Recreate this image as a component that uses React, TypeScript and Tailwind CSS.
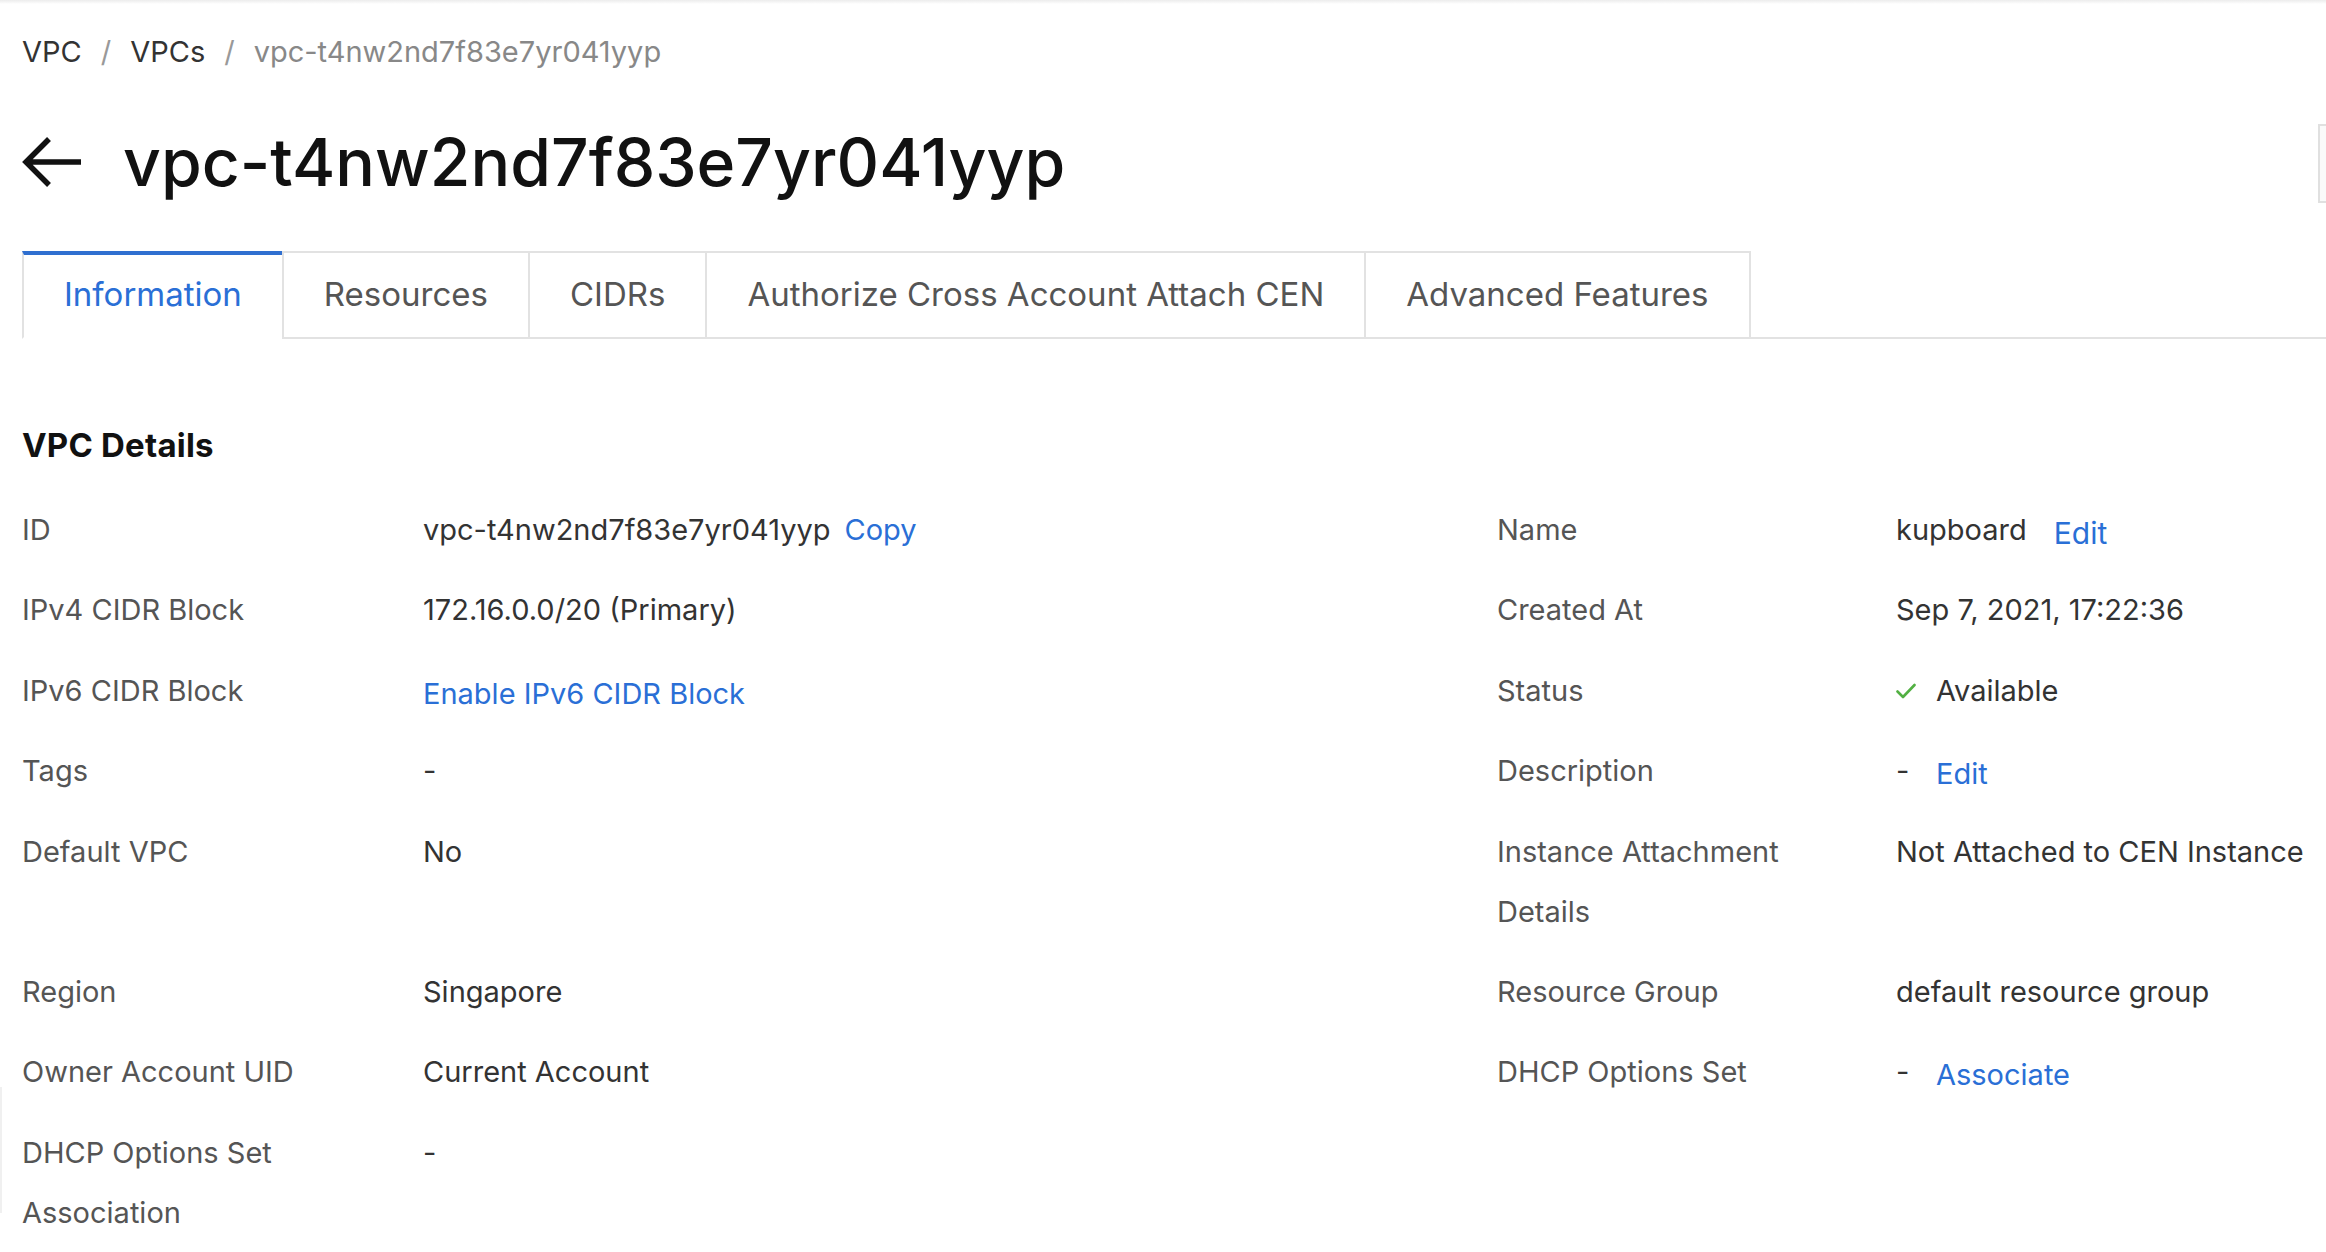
import React from "react";

const font = { fontFamily: "Inter, 'Noto Sans', sans-serif" };

function Check() {
  return (
    <svg width="20" height="16" viewBox="0 0 20 16" className="mr-[20px] shrink-0">
      <path d="M1.5 8.5 L7 14 L18.5 2" fill="none" stroke="#52b043" strokeWidth="2.6" strokeLinecap="round" strokeLinejoin="round" />
    </svg>
  );
}

function Link({ children, className = "" }: { children: React.ReactNode; className?: string }) {
  return <span className={`text-[#2a6fd6] ${className}`}>{children}</span>;
}

type Cell = { label: string; value: React.ReactNode };

const rows: [Cell, Cell | null][] = [
  [
    {
      label: "ID",
      value: (
        <span className="flex items-center">
          vpc-t4nw2nd7f83e7yr041yyp
          <Link className="ml-[14px]">Copy</Link>
        </span>
      ),
    },
    {
      label: "Name",
      value: (
        <span className="flex items-center">
          kupboard
          <Link className="ml-[27px] text-[30px] translate-y-[3px]">Edit</Link>
        </span>
      ),
    },
  ],
  [
    { label: "IPv4 CIDR Block", value: "172.16.0.0/20 (Primary)" },
    { label: "Created At", value: "Sep 7, 2021, 17:22:36" },
  ],
  [
    { label: "IPv6 CIDR Block", value: <Link className="inline-block translate-y-[3px]">Enable IPv6 CIDR Block</Link> },
    {
      label: "Status",
      value: (
        <span className="flex items-center">
          <Check />
          Available
        </span>
      ),
    },
  ],
  [
    { label: "Tags", value: "-" },
    {
      label: "Description",
      value: (
        <span className="flex items-center">
          <span className="w-[40px]">-</span>
          <Link className="translate-y-[3px]">Edit</Link>
        </span>
      ),
    },
  ],
  [
    { label: "Default VPC", value: "No" },
    { label: "Instance Attachment Details", value: "Not Attached to CEN Instance" },
  ],
  [
    { label: "Region", value: "Singapore" },
    { label: "Resource Group", value: "default resource group" },
  ],
  [
    { label: "Owner Account UID", value: "Current Account" },
    {
      label: "DHCP Options Set",
      value: (
        <span className="flex items-center">
          <span className="w-[40px]">-</span>
          <Link className="translate-y-[3px]">Associate</Link>
        </span>
      ),
    },
  ],
  [{ label: "DHCP Options Set Association", value: "-" }, null],
];

const tabs = ["Information", "Resources", "CIDRs", "Authorize Cross Account Attach CEN", "Advanced Features"];

export default function App() {
  return (
    <div className="relative w-full min-h-[1252px] overflow-hidden bg-white" style={font}>
      <div className="h-[4px] bg-gradient-to-b from-[#ececec] to-white" />
      <div className="absolute left-0 top-[1087px] h-[126px] w-[2px] bg-[#f0f0f0]" />
      <div className="absolute left-[2318px] top-[124px] h-[79px] w-[120px] border-2 border-[#e0e0e0] bg-[#fafafa]" />

      <div className="pl-[22px]">
        {/* breadcrumb */}
        <div className="mt-[28px] flex h-[40px] items-center text-[29px] leading-[40px]">
          <span className="text-[#333]">VPC</span>
          <span className="mx-[19px] text-[#999]">/</span>
          <span className="text-[#333]">VPCs</span>
          <span className="mx-[19px] text-[#999]">/</span>
          <span className="text-[#888]">vpc-t4nw2nd7f83e7yr041yyp</span>
        </div>

        {/* title */}
        <div className="mt-[50px] flex h-[80px] items-center">
          <svg width="62" height="50" viewBox="0 0 62 50" className="shrink-0">
            <path d="M4 25 H59 M27 2 L4 25 L27 48" fill="none" stroke="#111" strokeWidth="5.5" strokeLinecap="butt" strokeLinejoin="miter" />
          </svg>
          <h1 className="ml-[39px] text-[66px] font-medium leading-[80px] text-[#111]">
            vpc-t4nw2nd7f83e7yr041yyp
          </h1>
        </div>

        {/* tabs */}
        <div className="mt-[49px] flex border-b-2 border-[#e2e2e2]">
          {tabs.map((t, i) => (
            <div
              key={t}
              className={
                i === 0
                  ? "-mb-[2px] flex h-[88px] items-center border-x-2 border-b-2 border-t-[4px] border-x-[#e2e2e2] border-b-white border-t-[#2f6fd0] px-[40px] pb-[2px] text-[33px] text-[#2a6fd6]"
                  : "-mb-[2px] -ml-[2px] flex h-[88px] items-center border-2 border-[#e2e2e2] px-[40px] text-[33px] text-[#555]"
              }
            >
              {t}
            </div>
          ))}
        </div>

        {/* details */}
        <h2 className="mt-[86px] h-[40px] text-[33px] font-bold leading-[40px] tracking-[0.2px] text-[#111]">VPC Details</h2>

        <div className="mt-[35px] grid grid-cols-[401px_1074px_399px_1fr] gap-y-[20.4px] text-[29px] leading-[60px]">
          {rows.map(([l, r], i) => (
            <React.Fragment key={i}>
              <div className="pr-[40px] text-[#555]">{l.label}</div>
              <div className="text-[#333]">{l.value}</div>
              <div className="pr-[40px] text-[#555]">{r ? r.label : ""}</div>
              <div className="whitespace-nowrap text-[#333]">{r ? r.value : ""}</div>
            </React.Fragment>
          ))}
        </div>
      </div>
    </div>
  );
}
